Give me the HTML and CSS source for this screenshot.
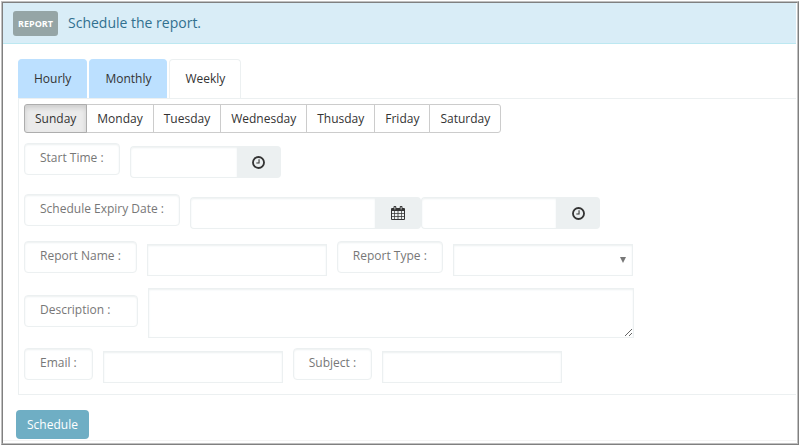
FILE: index.html
```
<!DOCTYPE html>
<html lang="en">
<head>
<meta charset="utf-8">
<title>Schedule the report</title>
<link rel="stylesheet" href="styles.css">
</head>
<body>
<svg class="defs" aria-hidden="true">
  <symbol id="clock" viewBox="0 0 12 12">
    <circle cx="6" cy="6" r="5.1" fill="none" stroke="currentColor" stroke-width="1.7"/>
    <path d="M6.5 3v3.500H4" fill="none" stroke="currentColor" stroke-width="1"/>
  </symbol>
  <symbol id="calendar" viewBox="0 0 14 14">
    <path fill="currentColor" fill-rule="evenodd" d="M0 3q0-1 1-1h1.500V1q0-1 1-1h.8q1 0 1 1v1h3.400V1q0-1 1-1h.8q1 0 1 1v1H13q1 0 1 1v10q0 1-1 1H1q-1 0-1-1zM1 5v2h2.300V5zM4 5v2h2.600V5zM7.400 5v2H10V5zM10.700 5v2H13V5zM1 7.700v2.300h2.300V7.700zM4 7.700v2.300h2.600V7.700zM7.400 7.700v2.300H10V7.700zM10.700 7.700v2.300H13V7.700zM1 10.700V13h2.300v-2.300zM4 10.700V13h2.600v-2.300zM7.400 10.700V13H10v-2.300zM10.700 10.700V13H13v-2.300zM3.500 1v2.500h.8V1zM9.700 1v2.500h.8V1z"/>
  </symbol>
</svg>
<div class="frame">
  <div class="panel">
    <header class="alert"><span class="badge">REPORT</span><span>Schedule the report.</span></header>
    <form class="content">
      <nav class="tabs">
        <a class="tab" href="#hourly">Hourly</a>
        <a class="tab" href="#monthly">Monthly</a>
        <a class="tab active" href="#weekly">Weekly</a>
      </nav>
      <section class="pane">
        <div class="days">
          <button type="button" class="day selected">Sunday</button>
          <button type="button" class="day">Monday</button>
          <button type="button" class="day">Tuesday</button>
          <button type="button" class="day">Wednesday</button>
          <button type="button" class="day">Thusday</button>
          <button type="button" class="day">Friday</button>
          <button type="button" class="day">Saturday</button>
        </div>
        <div class="row start">
          <label class="label" for="start">Start Time :</label>
          <div class="group"><input id="start" class="time-short" type="text"><button type="button" class="addon" aria-label="Pick start time"><svg class="clock"><use href="#clock"/></svg></button></div>
        </div>
        <div class="row expiry">
          <label class="label" for="date">Schedule Expiry Date :</label>
          <div class="groups">
            <div class="group"><input id="date" class="date" type="text"><button type="button" class="addon wide" aria-label="Pick expiry date"><svg class="calendar"><use href="#calendar"/></svg></button></div>
            <div class="group"><input class="time" type="text" aria-label="Expiry time"><button type="button" class="addon" aria-label="Pick expiry time"><svg class="clock"><use href="#clock"/></svg></button></div>
          </div>
        </div>
        <div class="row report">
          <label class="label" for="name">Report Name :</label>
          <input id="name" class="field" type="text">
          <label class="label" for="type">Report Type :</label>
          <div class="select"><select id="type" class="field"><option></option></select></div>
        </div>
        <div class="row description">
          <label class="label fixed" for="desc">Description :</label>
          <textarea id="desc"></textarea>
        </div>
        <div class="row mail">
          <label class="label" for="email">Email :</label>
          <input id="email" class="field" type="text">
          <label class="label" for="subject">Subject :</label>
          <input id="subject" class="field" type="text">
        </div>
      </section>
      <button type="button" class="submit">Schedule</button>
    </form>
  </div>
</div>
</body>
</html>
```
FILE: styles.css
```
* { box-sizing: border-box; }
body {
  margin: 0;
  padding: 1px 0 0 1px;
  background: #fff;
  color: #333;
  font: 12px/20px "Open Sans", sans-serif;
}
button, input, select, textarea { margin: 0; font: inherit; color: inherit; }
.defs { position: absolute; width: 0; height: 0; }
.frame { border: 1px solid #c0c0c0; border-right-color: #808080; border-bottom-color: #808080; }
.panel {
  padding: 0 1px 2px 0;
  border: 1px solid #808080;
  border-right-color: #c0c0c0;
  border-bottom-color: #c0c0c0;
}
.alert {
  display: flex;
  align-items: center;
  gap: 10px;
  height: 41px;
  padding: 0 10px;
  background: #d9edf7;
  border-bottom: 1px solid #bce8f1;
  color: #31708f;
  font-size: 14px;
}
.badge {
  width: 45px;
  border-radius: 3px;
  background: #95a5a6;
  color: #fff;
  font-size: 9px;
  font-weight: 700;
  line-height: 25px;
  text-align: center;
}
.content { padding: 15px 0 1px 15px; border-bottom: 1px solid #f4f4f4; }
.tabs { display: flex; gap: 2px; }
.tab {
  height: 39px;
  padding: 9px 15px;
  border: 1px solid #bce0ff;
  border-bottom: 0;
  border-radius: 4px 4px 0 0;
  background: #bce0ff;
  color: #333;
  text-decoration: none;
}
.tab.active { background: #fff; border-color: #ecf0f1; }
.pane {
  padding: 5px 5px 11px;
  border: 1px solid #ecf0f1;
  border-right: 0;
}
.days { display: flex; }
.day {
  height: 29px;
  padding: 0 10px;
  margin-left: -1px;
  border: 1px solid #ccc;
  background: #fff;
}
.day:first-child { margin-left: 0; border-radius: 3px 0 0 3px; }
.day:last-child { border-radius: 0 3px 3px 0; }
.day.selected {
  position: relative;
  background: #ebebeb;
  border-color: #adadad;
  box-shadow: inset 0 3px 5px rgba(0, 0, 0, .125);
}
.row { display: flex; align-items: flex-start; gap: 10px; margin-top: 12px; }
.start { margin-top: 10px; }
.expiry { margin-top: 16px; }
.mail { margin-top: 10px; }
.label {
  height: 32px;
  padding: 4px 15px;
  border: 1px solid #ecf0f1;
  border-radius: 4px;
  box-shadow: inset 0 1px 2px #ecf0f1;
  color: #777;
}
.fixed { width: 114px; margin-top: 7px; }
.group, .groups { display: flex; }
.row > .group, .row > .groups, .row > .field, .select { margin-top: 3px; }
input, select, textarea {
  border: 1px solid #ecf0f1;
  border-radius: 0;
  background: #fff;
  box-shadow: inset 0 1px 2px #ecf0f1;
  outline: 0;
  padding: 4px 8px;
}
input, select { height: 32px; }
.field { width: 180px; }
.group input { border-right: 0; border-radius: 4px 0 0 4px; }
.time-short { width: 107px; }
.date { width: 185px; }
.time { width: 135px; }
.addon {
  display: flex;
  align-items: center;
  justify-content: center;
  width: 44px;
  height: 32px;
  padding: 0;
  border: 0;
  border-radius: 0 4px 4px 0;
  background: #ecf0f1;
}
.addon.wide { width: 46px; }
.clock { width: 13px; height: 13px; }
.calendar { width: 14px; height: 14px; }
.select { position: relative; }
.select select { display: block; appearance: none; }
.select::after {
  content: "";
  position: absolute;
  top: 13px;
  right: 7px;
  border: 3px solid transparent;
  border-top: 6px solid #777;
  border-bottom: 0;
}
textarea { display: block; width: 486px; height: 50px; }
.submit {
  display: block;
  height: 29px;
  margin: 15px 0 0 -2px;
  padding: 0 11px;
  border: 0;
  border-radius: 4px;
  background: #6faec4;
  color: #fff;
}
```
